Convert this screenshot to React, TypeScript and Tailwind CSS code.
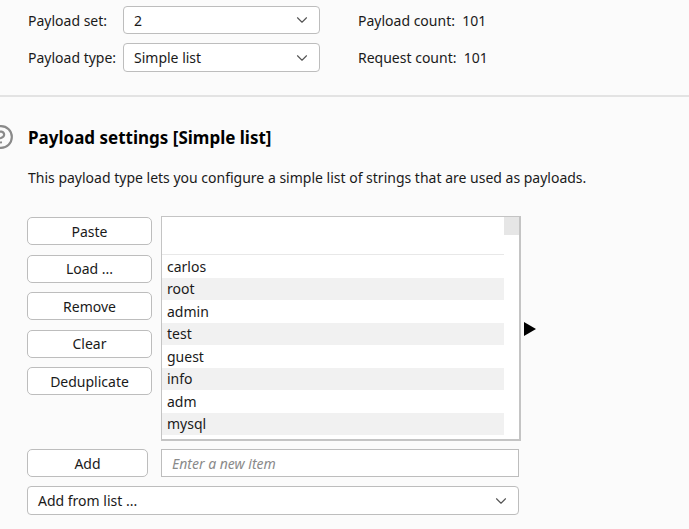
import { ChevronDown, CircleHelp } from "lucide-react";

const items = ["carlos", "root", "admin", "test", "guest", "info", "adm", "mysql"];
const buttons = ["Paste", "Load ...", "Remove", "Clear", "Deduplicate"];

const font = { fontFamily: '"Noto Sans", "Open Sans", sans-serif' };

const Select = ({ value, className }: { value: string; className: string }) => (
  <div
    className={`flex items-center justify-between bg-white border border-[#bdbdbd] rounded-[4px] pl-[10px] pr-[8px] ${className}`}
  >
    <span>{value}</span>
    <ChevronDown className="w-[18px] h-[18px] text-[#555]" strokeWidth={1.5} />
  </div>
);

const Button = ({ label, className }: { label: string; className: string }) => (
  <button
    className={`h-[28px] bg-white border border-[#bdbdbd] rounded-[5px] text-[14px] text-[#1a1a1a] ${className}`}
  >
    {label}
  </button>
);

export default function App() {
  return (
    <div className="w-[689px] h-[529px] bg-[#fbfbfb] text-[14px] text-[#1a1a1a] overflow-hidden" style={font}>
      {/* Top settings */}
      <div className="flex pt-[6px] pb-[23px] border-b-2 border-[#e3e3e3]">
        <div className="flex flex-col gap-[9px] pl-[28px]">
          <div className="flex items-center h-[28px]">
            <span className="w-[95px]">Payload set:</span>
            <Select value="2" className="w-[197px] h-[28px]" />
          </div>
          <div className="flex items-center h-[29px]">
            <span className="w-[95px]">Payload type:</span>
            <Select value="Simple list" className="w-[197px] h-[29px]" />
          </div>
        </div>
        <div className="flex flex-col gap-[9px] pl-[38px]">
          <div className="flex items-center h-[28px]">
            Payload count:&nbsp;&nbsp;101
          </div>
          <div className="flex items-center h-[29px]">
            Request count:&nbsp;&nbsp;101
          </div>
        </div>
      </div>

      {/* Payload settings */}
      <div className="relative pl-[28px] pt-[28px]">
        <CircleHelp
          className="absolute left-[-12px] top-[27px] w-[26px] h-[26px] text-[#8a8a8a]"
          strokeWidth={2}
        />
        <h2 className="text-[17px] font-bold text-black leading-[26px]">Payload settings [Simple list]</h2>
        <p className="mt-[17px] leading-[20px]">
          This payload type lets you configure a simple list of strings that are used as payloads.
        </p>

        <div className="flex mt-[28px]">
          <div className="flex flex-col gap-[9.5px] pt-[1px] w-[125px] -ml-[1px]">
            {buttons.map((b) => (
              <Button key={b} label={b} className="w-[125px]" />
            ))}
          </div>
          <div className="ml-[9px] w-[360px] h-[225px] bg-white border-2 border-[#c4c4c4] border-t border-l flex">
            <div className="flex-1 flex flex-col">
              <div className="h-[38px] border-b border-[#e8e8e8] bg-white" />
              {items.map((it, i) => (
                <div
                  key={it}
                  className={`h-[22.5px] pl-[5px] flex items-center ${i % 2 === 1 ? "bg-[#f1f1f1]" : "bg-white"}`}
                >
                  {it}
                </div>
              ))}
            </div>
            <div className="w-[15px] bg-white">
              <div className="h-[18px] bg-[#e6e6e6]" />
            </div>
          </div>
          <div className="ml-[3px] mt-[106px] w-0 h-0 border-y-[7px] border-y-transparent border-l-[12px] border-l-black" />
        </div>

        <div className="flex mt-[8px] -ml-[1px]">
          <Button label="Add" className="w-[121px]" />
          <div className="ml-[13px] w-[358px] h-[28px] bg-white border border-[#bdbdbd] flex items-center pl-[10px] italic text-[#8a8a8a]">
            Enter a new item
          </div>
        </div>
        <Select value="Add from list ..." className="mt-[9px] -ml-[1px] w-[492px] h-[29px]" />
      </div>
    </div>
  );
}
